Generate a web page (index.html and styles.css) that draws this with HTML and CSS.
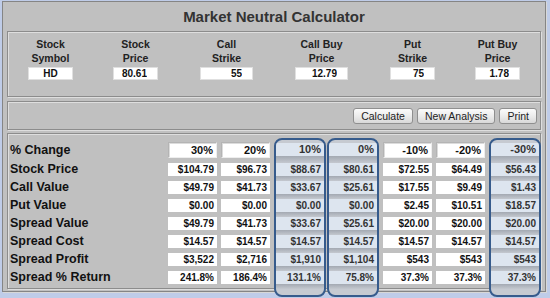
FILE: index.html
```html
<!DOCTYPE html>
<html lang="en">
<head>
  <meta charset="UTF-8" />
  <title>Market Neutral Calculator</title>
  <link rel="stylesheet" href="styles.css">
</head>
<body>

<div class="panel">
  <div class="title">Market Neutral Calculator</div>

  <div class="box inputs">
    <div class="field">
      <label for="sym">Stock<br>Symbol</label>
      <input id="sym" class="center" type="text" value="HD" />
    </div>
    <div class="field">
      <label for="price">Stock<br>Price</label>
      <input id="price" type="text" value="80.61" />
    </div>
    <div class="field">
      <label for="callK">Call<br>Strike</label>
      <input id="callK" class="wide" type="text" value="55" />
    </div>
    <div class="field">
      <label for="callP">Call Buy<br>Price</label>
      <input id="callP" class="wide" type="text" value="12.79" />
    </div>
    <div class="field">
      <label for="putK">Put<br>Strike</label>
      <input id="putK" type="text" value="75" />
    </div>
    <div class="field">
      <label for="putP">Put Buy<br>Price</label>
      <input id="putP" type="text" value="1.78" />
    </div>
  </div>

  <div class="box actions">
    <button onclick="calc()">Calculate</button>
    <button onclick="reset()">New Analysis</button>
    <button onclick="window.print()">Print</button>
  </div>

  <div class="box results" id="results">
    <div class="labels">
      <div class="lbl pct">% Change</div>
      <div class="lbl">Stock Price</div>
      <div class="lbl">Call Value</div>
      <div class="lbl">Put Value</div>
      <div class="lbl">Spread Value</div>
      <div class="lbl">Spread Cost</div>
      <div class="lbl">Spread Profit</div>
      <div class="lbl">Spread % Return</div>
    </div>
  </div>
</div>

<script>
  const $ = id => document.getElementById(id);
  const steps = [30, 20, 10, 0, -10, -20, -30];
  const marked = [10, 0, -30];

  const money = v => '$' + v.toFixed(2);

  function calc() {
    document.querySelectorAll('.vcol').forEach(c => c.remove());

    let s = +$('price').value || 0;
    let callK = +$('callK').value || 0, putK = +$('putK').value || 0;
    let cost = (+$('callP').value || 0) + (+$('putP').value || 0);

    steps.forEach(pct => {
      let sp = s * (1 + pct / 100);
      let call = Math.max(sp - callK, 0);
      let put = Math.max(putK - sp, 0);
      let value = call + put;
      let profit = (value - cost) * 100;
      let ret = cost ? (value - cost) / cost * 100 : 0;

      let cells = [
        pct + '%',
        money(sp),
        money(call),
        money(put),
        money(value),
        money(cost),
        (profit < 0 ? '-$' : '$') + Math.abs(Math.round(profit)).toLocaleString('en-US'),
        ret.toFixed(1) + '%'
      ];

      let col = document.createElement('div');
      col.className = 'vcol' + (marked.includes(pct) ? ' hl' : '');
      cells.forEach((txt, i) => {
        let c = document.createElement('div');
        c.className = 'cell' + (i === 0 ? ' pct' : '');
        c.textContent = txt;
        col.appendChild(c);
      });
      $('results').appendChild(col);
    });
  }

  function reset() {
    ['sym', 'price', 'callK', 'callP', 'putK', 'putP'].forEach(id => $(id).value = '');
    calc();
  }

  calc();
</script>
</body>
</html>
```

FILE: styles.css
```css
body {
  margin: 0;
  background: #bfcce8;
  font-family: "Liberation Sans", Arial, sans-serif;
  color: #111;
}

.panel {
  width: 544px;
  box-sizing: border-box;
  margin: 1px 0 6px 2px;
  padding: 0 4px 2px 4px;
  background: #c0c0c0;
  border: 1px solid #858585;
  box-shadow: 1px 1px 0 #d8d8d8;
}

.title {
  height: 29px;
  line-height: 29px;
  text-align: center;
  font-size: 15px;
  font-weight: bold;
  color: #333;
}

.box {
  border: 1px solid #8c8c8c;
  box-shadow: inset 1px 1px 0 #dedede, 1px 1px 0 #dedede;
}

/* top inputs */
.inputs {
  display: grid;
  grid-template-columns: 83fr 87fr 95fr 95fr 87fr 83fr;
  padding: 5px 1px 16px;
}

.field {
  text-align: center;
}

.field label {
  display: block;
  font-size: 10.5px;
  font-weight: bold;
  line-height: 14px;
  color: #222;
}

.field input {
  display: block;
  margin: 2px auto 0;
  width: 45px;
  height: 13px;
  box-sizing: border-box;
  padding: 0 10px 0 0;
  border: 1px solid #e0e0e0;
  background: #fff;
  font: bold 10px "Liberation Sans", Arial, sans-serif;
  color: #111;
  text-align: right;
}

.field input.wide { width: 53px; }
.field input.center { text-align: center; padding: 0; }

/* buttons */
.actions {
  display: flex;
  justify-content: flex-end;
  gap: 4px;
  margin-top: 4px;
  padding: 6px 3px 5px;
}

.actions button {
  height: 16px;
  padding: 0 7px;
  font: 10.5px "Liberation Sans", Arial, sans-serif;
  color: #222;
  border: 1px solid #8f8f8f;
  border-radius: 3px;
  background: linear-gradient(#fbfbfb, #ececec 50%, #d8d8d8);
  cursor: pointer;
}

/* results table */
.results {
  display: flex;
  align-items: flex-start;
  margin-top: 3px;
  padding: 4px 0 0 2px;
}

.labels {
  flex: 1;
  padding-top: 4px;
}

.lbl {
  height: 13px;
  line-height: 13px;
  margin-bottom: 5px;
  font-size: 12.5px;
  font-weight: bold;
  white-space: nowrap;
}

.lbl.pct {
  height: 16px;
  line-height: 16px;
}

.lbl:last-child { margin-bottom: 0; }

.vcol {
  width: 49px;
  margin-left: 4px;
  padding-top: 4px;
  box-sizing: border-box;
}

.vcol:last-child { margin-right: -1px; }

.cell {
  height: 13px;
  line-height: 13px;
  margin-bottom: 5px;
  padding-right: 3px;
  box-sizing: border-box;
  background: #fff;
  text-align: right;
  font-size: 10px;
  font-weight: bold;
  white-space: nowrap;
}

.cell:last-child { margin-bottom: 0; }

.cell.pct {
  height: 16px;
  line-height: 14px;
  font-size: 11px;
  border: 1px solid;
  border-color: #b4b4b4 #eee #eee #b4b4b4;
  box-shadow: inset 1px 1px 0 #dcdcdc;
}

/* highlighted columns */
.vcol.hl {
  width: 52px;
  padding: 3px 0 6px;
  margin-bottom: -9px;
  border: 2px solid #365b8c;
  border-radius: 8px;
  background: #c6cad1;
  overflow: hidden;
}

.hl + .hl { margin-left: 1px; }

.hl .cell,
.hl .cell.pct {
  height: 18px;
  line-height: 13px;
  margin: 0;
  padding-bottom: 5px;
  border: none;
  box-shadow: none;
  background: linear-gradient(#dde5ef 13px, #a3a9b2 13px, #c4c8cf);
  color: #333;
}

.hl .cell.pct {
  height: 20px;
  padding-bottom: 7px;
}
```
